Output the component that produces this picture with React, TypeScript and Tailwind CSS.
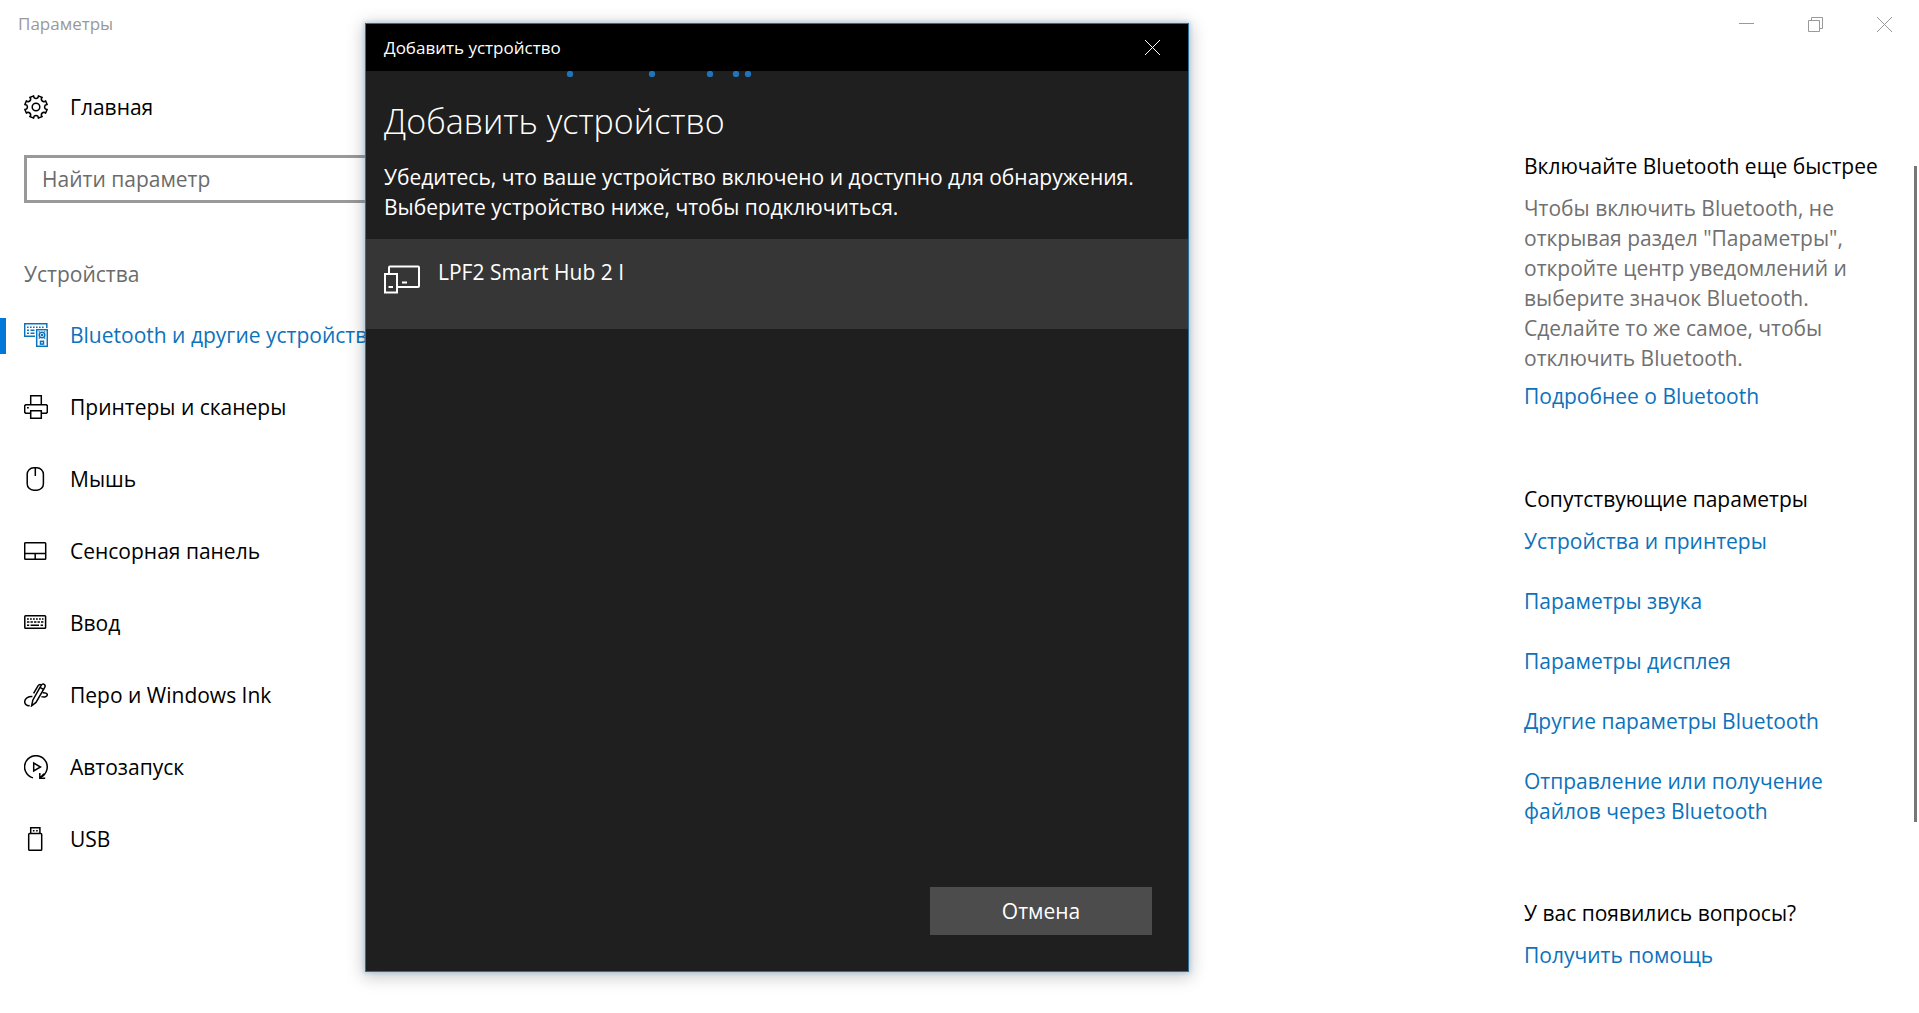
import type { ReactNode } from "react";

const GEAR_TEETH = 8;

function gearPoint(radius: number, degrees: number) {
  const a = (degrees * Math.PI) / 180;
  return `${(12 + radius * Math.cos(a)).toFixed(2)} ${(12 + radius * Math.sin(a)).toFixed(2)}`;
}

function gearPath() {
  let d = "";
  for (let i = 0; i < GEAR_TEETH; i++) {
    const valley = (i * 360) / GEAR_TEETH;
    d += `${i === 0 ? "M" : "L"}${gearPoint(11.4, valley - 12)}`;
    d += `L${gearPoint(9.6, valley - 12)}`;
    d += `Q${gearPoint(7.8, valley)} ${gearPoint(9.6, valley + 12)}`;
    d += `L${gearPoint(11.4, valley + 12)}`;
  }
  return d + "Z";
}

function Icon({ children }: { children: ReactNode }) {
  return (
    <svg
      className="mb-0.5 shrink-0"
      width="24"
      height="24"
      viewBox="0 0 24 24"
      fill="none"
      stroke="currentColor"
      strokeWidth={1.5}
      aria-hidden="true"
    >
      {children}
    </svg>
  );
}

const GearIcon = () => (
  <Icon>
    <path d={gearPath()} strokeLinejoin="round" />
    <circle cx="12" cy="12" r="3.8" />
  </Icon>
);

const DevicesIcon = () => (
  <Icon>
    <path d="M11 13.3H.7V.7h22.1V5" />
    <path d="M3 4.2h18" strokeDasharray="1.6 1.4" />
    <path d="M3 7.3h2M6.5 7.3h4" />
    <path d="M3 10.3h2M6.5 10.3h4" />
    <rect x="12.7" y="6.7" width="10.6" height="16.6" />
    <path d="M14.7 8.7h1M20.3 8.7h1M14.7 15.3h1M20.3 15.3h1" />
    <circle cx="18" cy="12" r="2.8" />
    <circle cx="18" cy="12" r=".6" />
    <rect x="16.5" y="18.3" width="3" height="2.8" />
  </Icon>
);

const PrinterIcon = () => (
  <Icon>
    <path d="M6.7 9.7V.7h10.6v9" />
    <path d="M6.7 18.3h-5l-1-1V10.7l1-1h20.6l1 1v6.6l-1 1h-5" />
    <path d="M6.7 15.7h10.6v7.6H6.7z" />
    <path d="M3 12.7h1.8" />
  </Icon>
);

const MouseIcon = () => (
  <Icon>
    <rect x="3.2" y=".8" width="16.2" height="22.4" rx="6.5" />
    <path d="M11.3 1v8" />
  </Icon>
);

const TouchpadIcon = () => (
  <Icon>
    <rect x=".7" y="3.7" width="21" height="16.6" rx=".8" />
    <path d="M.7 14.5h21M11.2 14.5v5.8" />
  </Icon>
);

const KeyboardIcon = () => (
  <Icon>
    <rect x=".8" y="4.8" width="20.8" height="12.4" rx=".8" />
    <path d="M3 8h16.5" strokeDasharray="1.8 1.2" />
    <path d="M3 11h16.5" strokeDasharray="2.4 1.1" />
    <path d="M3 14.2h2.2M6.6 14.2h8.4M16.6 14.2h2.4" />
  </Icon>
);

const PenIcon = () => (
  <Icon>
    <path d="M7.6 22.8l1.2-5.6L17 2.6c.8-1.4 2-2 3.2-1.3 1.1.7 1.2 1.9.4 3.3L12 19.4z" />
    <path d="M17.4 1.8c-1.4-.7-2.6-.3-3.4 1L9.6 10.4M16 4.4l3.4 2" />
    <path d="M8.4 13.6C4 13.4.7 15.6.7 18.8c0 2.7 2.6 4.3 5 3.8" />
    <path d="M18.6 9.7c2.6-.2 4.7.7 4.7 2 0 1.8-3 2.9-5.9 1.9" />
  </Icon>
);

const AutoplayIcon = () => (
  <Icon>
    <path d="M9 22.9A11.3 11.3 0 1 1 16.3 22.4" />
    <path d="M15.8 18v5.3h5.4M16 23l4-4.2" />
    <path d="M9.7 8v8l6.8-4z" />
  </Icon>
);

const UsbIcon = () => (
  <Icon>
    <path d="M6.7 6.5V.7h9.2v5.8" />
    <rect x="4.7" y="6.5" width="13" height="16.8" rx="1" />
    <path d="M8.9 3.8h1.6M12.1 3.8h1.6" />
  </Icon>
);

const NAV: { label: string; icon: () => ReactNode; active?: boolean }[] = [
  { label: "Bluetooth и другие устройства", icon: DevicesIcon, active: true },
  { label: "Принтеры и сканеры", icon: PrinterIcon },
  { label: "Мышь", icon: MouseIcon },
  { label: "Сенсорная панель", icon: TouchpadIcon },
  { label: "Ввод", icon: KeyboardIcon },
  { label: "Перо и Windows Ink", icon: PenIcon },
  { label: "Автозапуск", icon: AutoplayIcon },
  { label: "USB", icon: UsbIcon },
];

const RELATED = [
  "Устройства и принтеры",
  "Параметры звука",
  "Параметры дисплея",
  "Другие параметры Bluetooth",
  "Отправление или получение файлов через Bluetooth",
];

function TitleBar() {
  return (
    <header className="flex h-12 items-center justify-between text-[#999]">
      <span className="pl-[18px] text-[17px]">Параметры</span>
      <div className="flex h-full">
        <button aria-label="Свернуть" className="flex w-[69px] items-center justify-center">
          <svg width="15" height="15" viewBox="0 0 15 15" stroke="currentColor" fill="none" aria-hidden="true">
            <path d="M0 6.5h15" />
          </svg>
        </button>
        <button aria-label="Восстановить" className="flex w-[69px] items-center justify-center">
          <svg width="15" height="15" viewBox="0 0 15 15" stroke="currentColor" fill="none" aria-hidden="true">
            <path d="M.5 3.5h11v11H.5zM3.5 3.500v-3h11v11h-3" />
          </svg>
        </button>
        <button aria-label="Закрыть" className="flex w-[69px] items-center justify-center">
          <svg width="15" height="15" viewBox="0 0 15 15" stroke="currentColor" fill="none" aria-hidden="true">
            <path d="M0 0l15 15M15 0L0 15" />
          </svg>
        </button>
      </div>
    </header>
  );
}

function Sidebar() {
  return (
    <nav className="w-[480px] shrink-0 text-black">
      <a href="#home" className="mt-6 flex h-[72px] items-center gap-[22px] pl-6">
        <GearIcon />
        Главная
      </a>
      <div className="mt-[11px] px-6">
        <input
          type="search"
          aria-label="Найти параметр"
          placeholder="Найти параметр"
          className="block h-12 w-full border-3 border-[#999] px-[15px] placeholder:text-[#6b6b6b]"
        />
      </div>
      <h2 className="mt-14 mb-[11px] pl-6 leading-[30px] text-[#6b6b6b]">Устройства</h2>
      <ul>
        {NAV.map(({ label, icon: NavIcon, active }) => (
          <li key={label}>
            <a
              href="#section"
              aria-current={active ? "page" : undefined}
              className={
                active
                  ? "flex h-[72px] items-center whitespace-nowrap text-[#0c72bb]"
                  : "flex h-[72px] items-center whitespace-nowrap"
              }
            >
              <span className={active ? "h-9 w-1.5 bg-[#0078d7]" : "h-9 w-1.5"} />
              <span className="flex items-center gap-[22px] pl-[18px]">
                <NavIcon />
                {label}
              </span>
            </a>
          </li>
        ))}
      </ul>
    </nav>
  );
}

function RelatedColumn() {
  return (
    <aside className="w-[395px] shrink-0 pt-[103px] leading-[30px]">
      <section>
        <h3 className="text-black">Включайте Bluetooth еще быстрее</h3>
        <p className="mt-3 w-[340px] text-[#707070]">
          Чтобы включить Bluetooth, не открывая раздел "Параметры", откройте центр уведомлений и
          выберите значок Bluetooth. Сделайте то же самое, чтобы отключить Bluetooth.
        </p>
        <a href="#more" className="mt-2 block text-[#0c72bb]">
          Подробнее о Bluetooth
        </a>
      </section>
      <section className="mt-[73px]">
        <h3 className="text-black">Сопутствующие параметры</h3>
        <ul className="mt-3 flex w-[340px] flex-col gap-[30px]">
          {RELATED.map((label) => (
            <li key={label}>
              <a href="#related" className="block text-[#0c72bb]">
                {label}
              </a>
            </li>
          ))}
        </ul>
      </section>
      <section className="mt-[72px]">
        <h3 className="text-black">У вас появились вопросы?</h3>
        <a href="#help" className="mt-3 block text-[#0c72bb]">
          Получить помощь
        </a>
      </section>
    </aside>
  );
}

function ProgressDots() {
  return (
    <svg className="block" width="822" height="6" viewBox="0 0 822 6" fill="#1f74bd" aria-hidden="true">
      {[204, 286, 344, 370, 382].map((x) => (
        <circle key={x} cx={x} cy="3" r="3.2" />
      ))}
    </svg>
  );
}

function AddDeviceDialog() {
  return (
    <div
      role="dialog"
      aria-labelledby="dialog-title"
      className="absolute top-[23px] left-[365px] flex h-[949px] w-[824px] flex-col border border-[#2f6f93] bg-[#1f1f1f] text-white shadow-[0_0_4px_1px_rgba(90,170,220,0.4),0_3px_16px_2px_rgba(0,0,0,0.22)]"
    >
      <div className="flex h-[47px] shrink-0 items-center justify-between bg-black pl-[18px]">
        <span className="text-[17px]">Добавить устройство</span>
        <button aria-label="Закрыть окно" className="flex h-full w-[71px] items-center justify-center">
          <svg width="15" height="15" viewBox="0 0 15 15" stroke="currentColor" fill="none" aria-hidden="true">
            <path d="M0 0l15 15M15 0L0 15" />
          </svg>
        </button>
      </div>
      <ProgressDots />
      <div className="px-[18px]">
        <h1 id="dialog-title" className="mt-5 text-[34px] leading-[48px] font-light">
          Добавить устройство
        </h1>
        <p className="mt-[17px] leading-[30px]">
          Убедитесь, что ваше устройство включено и доступно для обнаружения.
          <br />
          Выберите устройство ниже, чтобы подключиться.
        </p>
      </div>
      <button className="mt-[17px] flex h-[90px] shrink-0 items-start gap-[18px] bg-[#363636] px-[18px] pt-[18px] text-left leading-[30px]">
        <svg
          className="mt-2 shrink-0"
          width="36"
          height="30"
          viewBox="0 0 36 30"
          fill="none"
          stroke="currentColor"
          strokeWidth="2"
          aria-hidden="true"
        >
          <path d="M5 8V2.5a1 1 0 0 1 1-1h28a1 1 0 0 1 1 1V21a1 1 0 0 1-1 1H14" />
          <rect x="1" y="9" width="12" height="18.5" />
          <path d="M4.5 22H9M18 17.500h5" />
        </svg>
        LPF2 Smart Hub 2 I
      </button>
      <div className="mt-auto flex justify-end px-9 pb-9">
        <button className="h-12 w-[222px] bg-[#4c4c4c] pt-0.5">Отмена</button>
      </div>
    </div>
  );
}

export default function App() {
  return (
    <div className="relative min-h-screen bg-white font-['Open_Sans','Noto_Sans',sans-serif] text-[21px]">
      <TitleBar />
      <div className="flex">
        <Sidebar />
        <main className="flex-1" />
        <RelatedColumn />
        <div className="mt-[118px] mr-0.5 ml-[-5px] h-[656px] w-[3px] bg-[#777]" />
      </div>
      <AddDeviceDialog />
    </div>
  );
}
